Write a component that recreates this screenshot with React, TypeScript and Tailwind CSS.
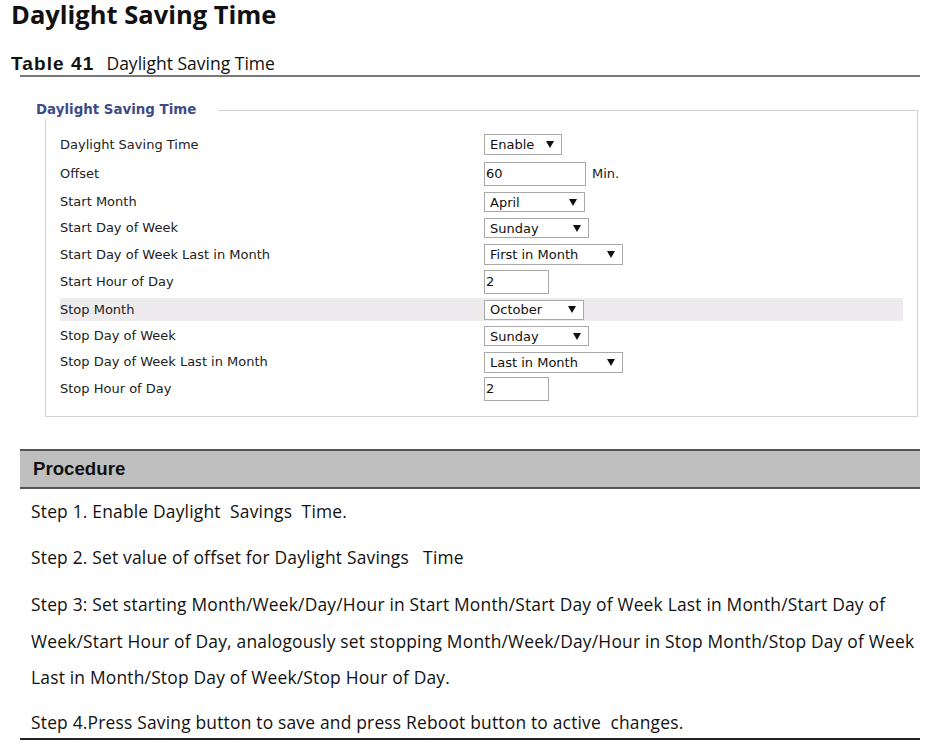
import React from "react";

const ui = { fontFamily: '"DejaVu Sans", Verdana, sans-serif' };
const doc = { fontFamily: '"Open Sans", "Noto Sans", sans-serif' };
const arial = { fontFamily: '"Liberation Sans", Arial, sans-serif' };

function Tri() {
  return (
    <svg width="8" height="7" viewBox="0 0 8 7" className="shrink-0">
      <polygon points="0,0 8,0 4,7" fill="#111" />
    </svg>
  );
}

function Select({ value, w, h = 20 }: { value: string; w: number; h?: number }) {
  return (
    <div
      className="flex items-center justify-between border border-[#a9a9a9] bg-white pl-[5px] pr-[7px] text-[13px] text-[#111]"
      style={{ width: w, height: h }}
    >
      <span className="leading-none">{value}</span>
      <Tri />
    </div>
  );
}

function Input({ value, w }: { value: string; w: number }) {
  return (
    <div
      className="flex h-[24px] items-center border border-[#a9a9a9] bg-white pl-[1px] text-[13px] text-[#111]"
      style={{ width: w }}
    >
      {value}
    </div>
  );
}

type Row = { label: string; h: number; ctrl: React.ReactNode; hl?: boolean };

export default function App() {
  const rows: Row[] = [
    { label: "Daylight Saving Time", h: 29, ctrl: <Select value="Enable" w={78} h={21} /> },
    {
      label: "Offset",
      h: 30,
      ctrl: (
        <div className="flex items-center gap-[6px]">
          <Input value="60" w={102} />
          <span className="text-[13px] text-[#222]">Min.</span>
        </div>
      ),
    },
    { label: "Start Month", h: 26, ctrl: <Select value="April" w={101} /> },
    { label: "Start Day of Week", h: 26, ctrl: <Select value="Sunday" w={105} /> },
    { label: "Start Day of Week Last in Month", h: 27, ctrl: <Select value="First in Month" w={139} h={21} /> },
    { label: "Start Hour of Day", h: 28, ctrl: <Input value="2" w={65} /> },
    { label: "Stop Month", h: 27, ctrl: <Select value="October" w={100} />, hl: true },
    { label: "Stop Day of Week", h: 26, ctrl: <Select value="Sunday" w={105} /> },
    { label: "Stop Day of Week Last in Month", h: 26, ctrl: <Select value="Last in Month" w={139} h={21} /> },
    { label: "Stop Hour of Day", h: 28, ctrl: <Input value="2" w={65} /> },
  ];

  return (
    <div className="relative h-[754px] w-[933px] bg-white pt-[1px] text-black">
      {/* Title */}
      <div className="h-[27px] pl-[11px] text-[25.5px] font-bold leading-[26px] text-[#111]" style={doc}>
        Daylight Saving Time
      </div>

      {/* Table caption */}
      <div className="mt-[25px] flex h-[22px] items-baseline pl-[11px]">
        <span className="text-[19px] font-bold leading-[20px] tracking-[1.1px] text-[#111]" style={arial}>
          Table 41
        </span>
        <span className="ml-[12px] text-[17.5px] leading-[20px] text-[#111]" style={doc}>
          Daylight Saving Time
        </span>
      </div>
      <div className="ml-[20px] h-[2px] w-[900px] bg-[#777]" />

      {/* Fieldset */}
      <div className="ml-[36px] mt-[24px] w-[882px]" style={ui}>
        <div className="flex h-[18px] items-stretch">
          <div className="flex items-center text-[13.4px] font-bold leading-[18px] text-[#3d4c88]">
            Daylight Saving Time
          </div>
          <div className="ml-[22px] mt-[9px] flex-1 border-r border-t border-[#d2d2d2]" />
        </div>
        <div className="ml-[9px] w-[873px] border-b border-l border-r border-[#d2d2d2] pb-[13px] pl-[14px] pr-[14px] pt-[11px]">
          {rows.map((r) =>
            r.hl ? (
              <div key={r.label} className="flex items-center" style={{ height: r.h }}>
                <div className="flex h-[23px] w-full items-center bg-[#edebee]">
                  <div className="w-[424px] text-[13px] text-[#222]">{r.label}</div>
                  {r.ctrl}
                </div>
              </div>
            ) : (
              <div key={r.label} className="flex items-center" style={{ height: r.h }}>
                <div className="w-[424px] text-[13px] text-[#222]">{r.label}</div>
                {r.ctrl}
              </div>
            )
          )}
        </div>
      </div>

      {/* Procedure */}
      <div className="ml-[20px] mt-[32px] flex h-[40px] w-[900px] items-center border-b-2 border-t-2 border-[#555] bg-[#bfbfbf] pl-[13px]">
        <span className="text-[18.67px] font-bold text-[#111]" style={arial}>
          Procedure
        </span>
      </div>

      <div className="pl-[31px] text-[17.4px] tracking-[0.2px] text-[#111]" style={doc}>
        <div className="flex h-[45px] items-center whitespace-pre">Step 1. Enable Daylight  Savings  Time.</div>
        <div className="flex h-[46px] items-center whitespace-pre">Step 2. Set value of offset for Daylight Savings   Time</div>
        <div className="mt-[6px]">
          <div className="flex h-[36.5px] items-center whitespace-pre">
            Step 3: Set starting Month/Week/Day/Hour in Start Month/Start Day of Week Last in Month/Start Day of
          </div>
          <div className="flex h-[36.5px] items-center whitespace-pre">
            Week/Start Hour of Day, analogously set stopping Month/Week/Day/Hour in Stop Month/Stop Day of Week
          </div>
          <div className="flex h-[36.5px] items-center whitespace-pre">Last in Month/Stop Day of Week/Stop Hour of Day.</div>
        </div>
        <div className="mt-[12px] flex h-[30px] items-center whitespace-pre">
          Step 4.Press Saving button to save and press Reboot button to active  changes.
        </div>
      </div>
      <div className="ml-[20px] h-[2px] w-[900px] bg-[#222]" />
    </div>
  );
}
